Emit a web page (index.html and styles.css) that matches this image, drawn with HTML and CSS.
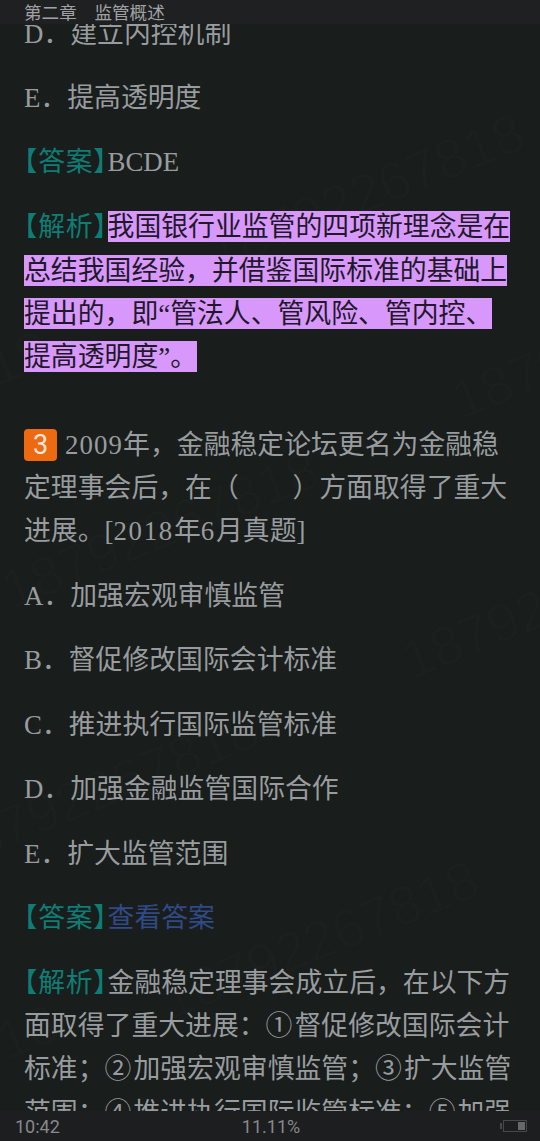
FILE: index.html
```html
<!DOCTYPE html>
<html lang="zh-CN">
<head>
<meta charset="utf-8">
<title>第二章 监管概述</title>
<link rel="stylesheet" href="styles.css">
</head>
<body>
<div class="screen">
  <header class="top">第二章　监管概述</header>
  <main class="content">
    <div class="wm wm-a">18792267818</div>
    <div class="wm wm-b">18792267818</div>
    <div class="wm wm-c">18792267818</div>
    <div class="wm wm-d">18792267818</div>
    <div class="wm wm-e">18792267818</div>
    <div class="wm wm-f">18792267818</div>
    <div class="wm wm-g">18792267818</div>
    <div class="wm wm-h">18792267818</div>
    <article class="flow">
      <p>D．建立内控机制</p>
      <p>E．提高透明度</p>
      <p><span class="tag">【答案】</span>BCDE</p>
      <p><span class="tag">【解析】</span><span class="mark">我国银行业监管的四项新理念是在总结我国经验，并借鉴国际标准的基础上提出的，即“管法人、管风险、管内控、提高透明度”。</span></p>
      <p class="question"><span class="num">3</span><span class="digits">2009</span>年，金融稳定论坛更名为金融稳定理事会后，在（　　）方面取得了重大进展。[<span class="digits-wide">2018</span>年<span class="digits-wide">6</span>月真题]</p>
      <p>A．加强宏观审慎监管</p>
      <p>B．督促修改国际会计标准</p>
      <p>C．推进执行国际监管标准</p>
      <p>D．加强金融监管国际合作</p>
      <p>E．扩大监管范围</p>
      <p><span class="tag">【答案】</span><span class="link">查看答案</span></p>
      <p><span class="tag">【解析】</span>金融稳定理事会成立后，在以下方面取得了重大进展：<span class="circled">①</span>督促修改国际会计标准；<span class="circled">②</span>加强宏观审慎监管；<span class="circled">③</span>扩大监管范围；<span class="circled">④</span>推进执行国际监管标准；<span class="circled">⑤</span>加强</p>
    </article>
  </main>
  <footer class="bottom">
    <span class="time">10:42</span>
    <span class="progress">11.11%</span>
    <span class="battery"><span class="battery-fill"></span></span>
  </footer>
</div>
</body>
</html>
```
FILE: styles.css
```css
* { box-sizing: border-box; }
html, body { margin: 0; padding: 0; background: #191d1b; }
.screen {
  width: 540px;
  height: 1141px;
  display: flex;
  flex-direction: column;
  overflow: hidden;
  font-family: "Liberation Serif", "Noto Sans CJK SC", serif;
}
.top {
  flex: 0 0 24px;
  background: #1f2022;
  color: #a0a2a4;
  font-family: "Noto Sans CJK SC", sans-serif;
  font-size: 17.6px;
  line-height: 23px;
  word-spacing: 3px;
  padding-left: 24px;
  position: relative;
  z-index: 2;
}
.content {
  flex: 1 1 auto;
  min-height: 0;
  position: relative;
  overflow: hidden;
  background: #191d1b;
}
.flow {
  position: relative;
  margin-top: -11.5px;
  padding: 0 24px;
  font-size: 26.85px;
  line-height: 43.3px;
  color: #989c9f;
}
.flow p { margin: 0 0 21.2px; }
.flow .question { margin-top: 44.5px; }
.tag { color: #0e7d76; font-feature-settings: "halt"; letter-spacing: 0.75px; }
.link { color: #2f4a86; }
.digits { letter-spacing: 1.1px; }
.digits-wide { letter-spacing: 1.7px; }
.circled { letter-spacing: 2px; }
.mark {
  background: #d898fb;
  color: #21182a;
  padding: 0.5px 0;
}
.num {
  display: inline-block;
  width: 33px;
  height: 32px;
  margin-right: 8px;
  border-radius: 4px;
  background: #ee6a10;
  color: #efe6de;
  font-family: "Roboto", sans-serif;
  font-size: 27px;
  line-height: 32px;
  text-align: center;
}
.wm {
  position: absolute;
  color: #1b1f1d;
  font-family: "Liberation Sans", sans-serif;
  font-size: 55px;
  line-height: 1;
  white-space: nowrap;
  transform: translate(-50%, -50%) rotate(-22deg);
}
.wm-a { left: 366px; top: 169px; }
.wm-b { left: 610px; top: 316px; }
.wm-c { left: 160px; top: 506px; }
.wm-d { left: 560px; top: 576px; }
.wm-e { left: 100px; top: 766px; }
.wm-f { left: 320px; top: 916px; }
.wm-g { left: -110px; top: 386px; }
.wm-h { left: -100px; top: 1060px; }
.bottom {
  flex: 0 0 30px;
  position: relative;
  z-index: 2;
  display: grid;
  grid-template-columns: 1fr auto 1fr;
  align-items: center;
  padding: 0 13px 0 15px;
  background: #1d1e20;
  color: #87898b;
  font-family: "Roboto", sans-serif;
  font-size: 18px;
}
.progress { text-align: center; }
.battery {
  justify-self: end;
  position: relative;
  display: flex;
  justify-content: flex-end;
  width: 24px;
  height: 12px;
  padding: 1px;
  border: 1px solid #47484a;
}
.battery::before {
  content: "";
  position: absolute;
  left: -4px;
  top: 2px;
  width: 2px;
  height: 6px;
  background: #47484a;
}
.battery-fill { width: 7px; background: #67686a; }
```
